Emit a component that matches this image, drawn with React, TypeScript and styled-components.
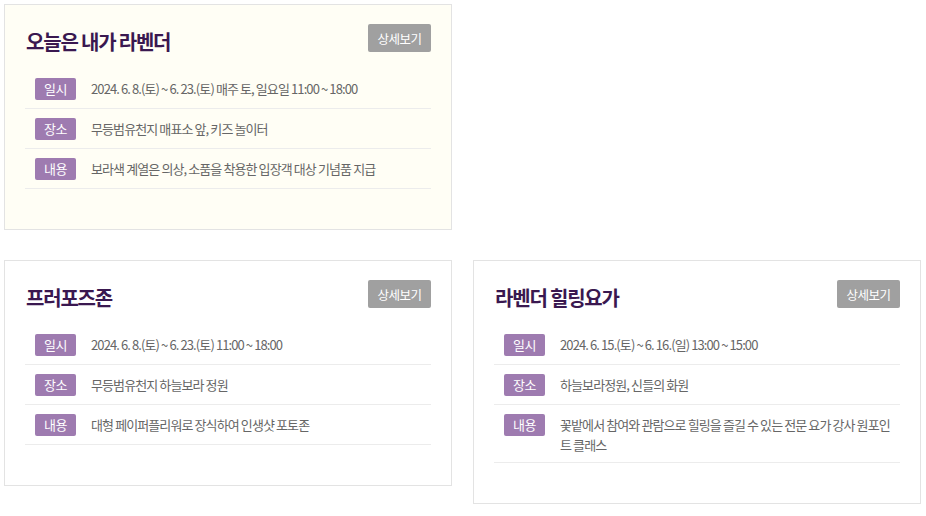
import { createGlobalStyle, styled } from "styled-components";

const GlobalStyle = createGlobalStyle`
  html, body {
    margin: 0;
    padding: 0;
    background: #ffffff;
  }
  body {
    font-family: "Noto Sans CJK KR", "Noto Sans", sans-serif;
  }
`;

interface Info {
  label: string;
  text: string;
}

interface Program {
  id: string;
  title: string;
  highlight?: boolean;
  infos: Info[];
}

const programs: Program[] = [
  {
    id: "lavender",
    title: "오늘은 내가 라벤더",
    highlight: true,
    infos: [
      {
        label: "일시",
        text: "2024. 6. 8.(토) ~ 6. 23.(토) 매주 토, 일요일 11:00 ~ 18:00",
      },
      { label: "장소", text: "무등범유천지 매표소 앞, 키즈 놀이터" },
      {
        label: "내용",
        text: "보라색 계열은 의상, 소품을 착용한 입장객 대상 기념품 지급",
      },
    ],
  },
  {
    id: "propose",
    title: "프러포즈존",
    infos: [
      { label: "일시", text: "2024. 6. 8.(토) ~ 6. 23.(토) 11:00 ~ 18:00" },
      { label: "장소", text: "무등범유천지 하늘보라 정원" },
      { label: "내용", text: "대형 페이퍼플리워로 장식하여 인생샷 포토존" },
    ],
  },
  {
    id: "yoga",
    title: "라벤더 힐링요가",
    infos: [
      { label: "일시", text: "2024. 6. 15.(토) ~ 6. 16.(일) 13:00 ~ 15:00" },
      { label: "장소", text: "하늘보라정원, 신들의 화원" },
      {
        label: "내용",
        text: "꽃밭에서 참여와 관람으로 힐링을 즐길 수 있는 전문 요가 강사 원포인트 클래스",
      },
    ],
  },
];

const App = () => {
  return (
    <>
      <GlobalStyle />
      <Grid>
        {programs.map((item, idx) => (
          <Card key={item.id} $highlight={item.highlight} $wide={idx === 0}>
            <Header>
              <Title>{item.title}</Title>
              <MoreButton type="button">상세보기</MoreButton>
            </Header>
            <InfoList>
              {item.infos.map((info) => (
                <InfoRow key={info.label}>
                  <Badge>{info.label}</Badge>
                  <InfoText>{info.text}</InfoText>
                </InfoRow>
              ))}
            </InfoList>
          </Card>
        ))}
      </Grid>
    </>
  );
};

export default App;

const Grid = styled.div`
  display: grid;
  grid-template-columns: 448px 448px;
  column-gap: 21px;
  row-gap: 30px;
  align-items: start;
  padding: 4px 0 0 4px;
`;

const Card = styled.section<{ $highlight?: boolean; $wide?: boolean }>`
  box-sizing: border-box;
  width: 448px;
  grid-column: ${({ $wide }) => ($wide ? "1 / -1" : "auto")};
  justify-self: start;
  border: 1px solid #e3e3e3;
  background: ${({ $highlight }) => ($highlight ? "#fffef5" : "#ffffff")};
  padding: 19px 20px 40px;
`;

const Header = styled.div`
  display: flex;
  justify-content: space-between;
  align-items: flex-start;
  height: 28px;
`;

const Title = styled.h3`
  margin: 0 0 0 1px;
  padding-top: 4px;
  font-size: 20px;
  line-height: 28px;
  font-weight: 700;
  letter-spacing: -1.2px;
  color: #3a1850;
`;

const MoreButton = styled.button`
  width: 63px;
  height: 28px;
  padding: 0;
  border: none;
  border-radius: 2px;
  background: #a0a0a0;
  color: #ffffff;
  font-family: inherit;
  font-size: 12.5px;
  letter-spacing: -0.5px;
  cursor: pointer;
`;

const InfoList = styled.ul`
  list-style: none;
  margin: 17px 0 0;
  padding: 0;
`;

const InfoRow = styled.li`
  display: flex;
  align-items: flex-start;
  gap: 15px;
  padding: 9px 0 8px 10px;
  border-bottom: 1px solid #ececec;
`;

const Badge = styled.span`
  flex: none;
  width: 41px;
  height: 22px;
  border-radius: 2px;
  background: #9e7bb0;
  color: #ffffff;
  font-size: 13px;
  line-height: 22px;
  text-align: center;
  letter-spacing: -0.5px;
`;

const InfoText = styled.p`
  flex: 1;
  margin: 1px 0 -1px;
  font-size: 13px;
  line-height: 20px;
  letter-spacing: -0.9px;
  color: #666666;
`;
